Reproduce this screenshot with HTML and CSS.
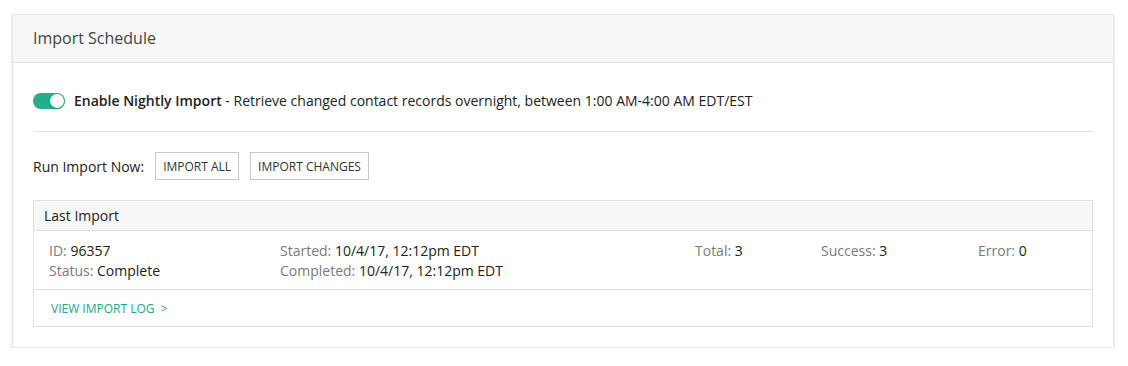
FILE: index.html
```html
<!DOCTYPE html>
<html lang="en">
<head>
  <meta charset="UTF-8">
  <meta name="viewport" content="width=device-width, initial-scale=1.0">
  <title>Import Schedule</title>
  <link rel="stylesheet" href="styles.css">
</head>
<body>
  <div class="panel">
    <div class="panel-header">Import Schedule</div>

    <div class="panel-body">
      <div class="nightly">
        <span class="toggle on"><span class="knob"></span></span>
        <span><strong>Enable Nightly Import</strong> - Retrieve changed contact records overnight, between 1:00 AM-4:00 AM EDT/EST</span>
      </div>

      <div class="run-now">
        <span>Run Import Now:</span>
        <button class="btn">Import All</button>
        <button class="btn">Import Changes</button>
      </div>

      <div class="last-import">
        <div class="last-import-header">Last Import</div>
        <div class="stats">
          <div>
            <div><span class="label">ID:</span> 96357</div>
            <div><span class="label">Status:</span> Complete</div>
          </div>
          <div>
            <div><span class="label">Started:</span> 10/4/17, 12:12pm EDT</div>
            <div><span class="label">Completed:</span> 10/4/17, 12:12pm EDT</div>
          </div>
          <div><span class="label">Total:</span> 3</div>
          <div><span class="label">Success:</span> 3</div>
          <div><span class="label">Error:</span> 0</div>
        </div>
        <div class="last-import-footer">
          <a href="#" class="log-link">View Import Log &nbsp;&gt;</a>
        </div>
      </div>
    </div>
  </div>
</body>
</html>
```

FILE: styles.css
```css
body {
  margin: 0;
  background: #fff;
  font-family: "Open Sans", sans-serif;
  font-size: 14px;
  color: #222;
}

.panel {
  margin: 14px 14px 0 12px;
  border: 1px solid #e6e6e6;
  box-shadow: 0 1px 2px rgba(0, 0, 0, 0.18);
  background: #fff;
}

.panel-header {
  height: 47px;
  line-height: 47px;
  padding: 0 20px;
  background: #f7f7f7;
  border-bottom: 1px solid #e2e2e2;
  font-size: 16px;
  color: #444;
}

.panel-body {
  padding: 28px 20px 20px;
}

.nightly {
  display: flex;
  align-items: center;
  gap: 9px;
  line-height: 20px;
  padding-bottom: 20px;
  border-bottom: 1px solid #e2e2e2;
}

.nightly strong {
  font-weight: 600;
}

.toggle {
  position: relative;
  display: inline-block;
  width: 32px;
  height: 16px;
  border-radius: 8px;
  background: #ccc;
  flex-shrink: 0;
}

.toggle.on {
  background: #22b089;
}

.toggle .knob {
  position: absolute;
  top: 1px;
  left: 1px;
  width: 14px;
  height: 14px;
  border-radius: 50%;
  background: #fff;
  box-shadow: 0 1px 2px rgba(0, 0, 0, 0.3);
}

.toggle.on .knob {
  left: 17px;
}

.run-now {
  display: flex;
  align-items: center;
  gap: 11px;
  margin-top: 20px;
}

.btn {
  height: 28px;
  padding: 0 7px;
  border: 1px solid #c8c8c8;
  background: #fff;
  font-family: "Open Sans", sans-serif;
  font-size: 12px;
  text-transform: uppercase;
  color: #333;
  cursor: pointer;
}

.last-import {
  margin-top: 20px;
  border: 1px solid #e0e0e0;
}

.last-import-header {
  height: 29px;
  line-height: 29px;
  padding: 0 10px;
  background: #f7f7f7;
  border-bottom: 1px solid #e0e0e0;
}

.stats {
  display: grid;
  grid-template-columns: 231px 415px 126px 157px auto;
  padding: 10px 15px 8px;
  line-height: 20px;
  border-bottom: 1px solid #e0e0e0;
}

.label {
  color: #7a7a7a;
}

.last-import-footer {
  height: 36px;
  line-height: 36px;
  padding: 0 17px;
}

.log-link {
  font-size: 12px;
  text-transform: uppercase;
  color: #22a884;
  text-decoration: none;
}
```
